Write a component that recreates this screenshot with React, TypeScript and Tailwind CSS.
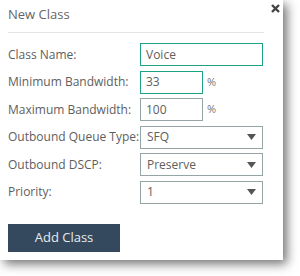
const Caret = () => (
  <svg width="9" height="6" viewBox="0 0 9 6" className="shrink-0">
    <path d="M0 0 H9 L4.5 6 Z" fill="#555" />
  </svg>
);

const Row = ({ label, children }: { label: string; children: React.ReactNode }) => (
  <div className="flex items-center">
    <div className="w-[132px] text-[12px] text-[#5e5e5e]">{label}</div>
    {children}
  </div>
);

const Select = ({ value }: { value: string }) => (
  <div className="flex h-[23px] w-[123px] items-center justify-between border border-[#95a5a6] pl-[6px] pr-[6px] text-[12px] text-[#5e5e5e]">
    <span>{value}</span>
    <Caret />
  </div>
);

export default function App() {
  return (
    <div className="h-[276px] w-[300px] bg-white font-['Open_Sans',sans-serif]">
      <div className="relative h-[260px] w-[283px] bg-white shadow-[4px_4px_10px_rgba(0,0,0,0.55)]">
        <button className="absolute right-[3px] top-[4px] p-0">
          <svg width="9" height="9" viewBox="0 0 9 9">
            <path d="M1 1 L8 8 M8 1 L1 8" stroke="#444" strokeWidth="2.4" />
          </svg>
        </button>
        <div className="px-[8px]">
          <div className="flex h-[33px] w-[256px] items-center border-b border-[#e3e3e3] pb-[3px] text-[13px] text-[#666]">
            New Class
          </div>
          <div className="mt-[10px] flex flex-col gap-[4.6px]">
            <Row label="Class Name:">
              <div className="flex h-[23px] w-[123px] items-center border border-[#1fa283] pl-[5px] text-[12px] text-[#5e5e5e]">
                Voice
              </div>
            </Row>
            <Row label="Minimum Bandwidth:">
              <div className="flex h-[23px] w-[63px] items-center border border-[#1fa283] pl-[5px] text-[12px] text-[#5e5e5e]">
                33
              </div>
              <span className="ml-[4px] text-[11px] text-[#777]">%</span>
            </Row>
            <Row label="Maximum Bandwidth:">
              <div className="flex h-[23px] w-[63px] items-center border border-[#95a5a6] pl-[5px] text-[12px] text-[#5e5e5e]">
                100
              </div>
              <span className="ml-[4px] text-[11px] text-[#777]">%</span>
            </Row>
            <Row label="Outbound Queue Type:">
              <Select value="SFQ" />
            </Row>
            <Row label="Outbound DSCP:">
              <Select value="Preserve" />
            </Row>
            <Row label="Priority:">
              <Select value="1" />
            </Row>
          </div>
          <button className="mt-[20px] flex h-[28px] w-[112px] items-center justify-center bg-[#34495e] text-[13px] text-[#e8ecef]">
            Add Class
          </button>
        </div>
      </div>
    </div>
  );
}
